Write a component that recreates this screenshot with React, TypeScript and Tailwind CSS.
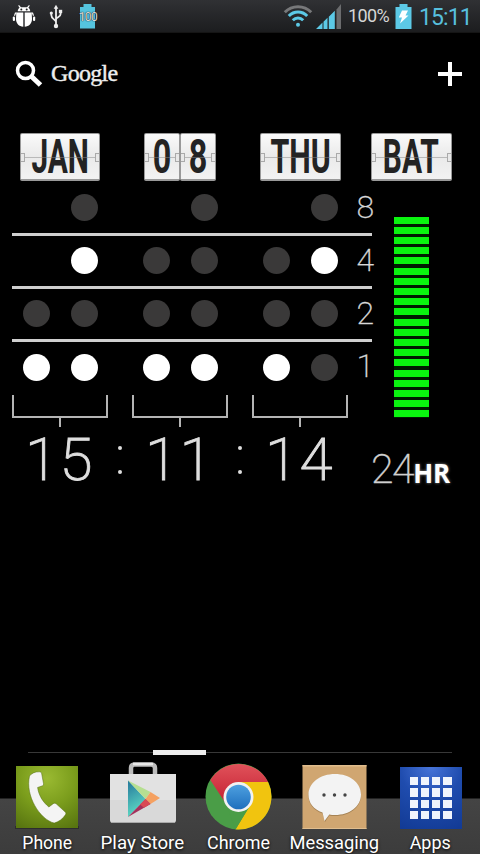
import { ReactNode } from "react";

// 0 = off, 1 = on, null = no lamp in that position
const rows = [
  { value: "8", lamps: [null, 0, null, 0, null, 0] },
  { value: "4", lamps: [null, 1, 0, 0, 0, 1] },
  { value: "2", lamps: [0, 0, 0, 0, 0, 0] },
  { value: "1", lamps: [1, 1, 1, 1, 1, 0] },
];

function StatusBar() {
  return (
    <div className="h-[33px] bg-linear-to-b from-[#303134] to-[#1c1d1f] border-b border-[#151515] flex items-center pl-3 pr-[9px]">
      <svg width="24" height="24" viewBox="0 0 24 24" fill="#fff">
        <path d="M7 1l2 2.300h6L17 1l.8.8-1.400 2C17.800 5 18.200 6 18.200 7.200H5.800C5.800 6 6.200 5 7.600 3.800l-1.400-2z" />
        <circle cx="9.300" cy="5.500" r="1" fill="#222" />
        <circle cx="14.700" cy="5.500" r="1" fill="#222" />
        <path d="M4.300 8.500h7v14.300C7 22.500 4 19.500 4 15zM12.700 8.500h7L20 15c0 4.500-3 7.500-7.300 7.800z" />
        <rect x="0.800" y="12.500" width="2.200" height="4.500" rx="1" />
        <rect x="21" y="12.500" width="2.200" height="4.500" rx="1" />
        <path d="M2 11.500l1-3h1.500v1H4l-1 2.500zM22 11.500l-1-3h-1.500v1h.5l1 2.500z" />
      </svg>
      <svg className="ml-[13px]" width="14" height="25" viewBox="0 0 14 25" fill="none" stroke="#eee" strokeWidth="1.800">
        <path d="M7 4v17M7 18C7 15.500 2.300 15.500 2.300 11V9M7 15.500c0-2.500 4.600-2.200 4.600-5.500V8" />
        <path d="M7 .8l2.300 4H4.700z" fill="#eee" stroke="none" />
        <circle cx="7" cy="22" r="2.200" fill="#eee" stroke="none" />
        <circle cx="2.300" cy="9" r="1.600" fill="#eee" stroke="none" />
        <path d="M9.900 5.800h3.300v3.300H9.900z" fill="#eee" stroke="none" />
      </svg>
      <div className="ml-[16px] relative w-[18px] h-[25px]">
        <svg width="18" height="25" viewBox="0 0 18 25" fill="#55c4de">
          <path d="M4.500 0h8v3H16v21.500H1V3h3.500z" />
        </svg>
        <span className="absolute left-[-1px] top-[6px] w-5 text-center text-[12px] leading-[15px] tracking-[-0.5px] text-[#ddd] [text-shadow:0_0_1px_#111,0_0_1px_#333]">100</span>
      </div>
      <div className="ml-auto flex items-center">
        <svg width="30" height="24" viewBox="0 0 30 24" fill="none" strokeWidth="3">
          <path d="M1.800 8.200C9 .8 21 .8 28.200 8.200" stroke="#77787a" />
          <path d="M5.800 12C11 6.700 19 6.700 24.200 12M9.800 16.200c3-3 7.400-3 10.400 0" stroke="#5cc9e6" />
          <circle cx="15" cy="20.800" r="2" fill="#5cc9e6" stroke="none" />
        </svg>
        <svg className="ml-[3px]" width="26" height="25" viewBox="0 0 26 25">
          <path d="M20.500 5.500L25 0v25h-4.500z" fill="#6b6c6e" />
          <path d="M0 25l6.500-6.500V25zM7.500 17.700l4-4V25h-4zM12.800 12.700L18.800 6.700V25h-6z" fill="#5cc9e6" />
        </svg>
        <span className="ml-[6px] w-[45px] text-[18px] leading-6 text-[#d6d6d6] tracking-[-0.6px] whitespace-nowrap">100%</span>
        <svg className="ml-[2px]" width="17" height="25" viewBox="0 0 17 25">
          <path d="M4.500 0h8v3H16.500v22H.5V3h4z" fill="#5cc9e6" />
          <path d="M7 6.500h6l-2.500 5h3L5 19.500l2-6H3.800z" fill="#fff" />
        </svg>
        <span className="ml-[7px] mt-[3px] w-[52px] text-[23px] leading-6 text-[#57bfdd] tracking-[-0.9px] whitespace-nowrap">15:11</span>
      </div>
    </div>
  );
}

function FlipCard({ text, className, scale }: { text: string; className: string; scale: string }) {
  return (
    <div className={`relative h-[48px] rounded-[2px] border border-[#999] border-b-2 bg-linear-to-b from-[#fafafa] via-[#eaeaea] to-[#f2f2f2] flex items-center justify-center ${className}`}>
      <span className={`text-[49px] leading-[58px] font-bold text-[#232323] whitespace-nowrap ${scale}`}>{text}</span>
      <div className="absolute inset-x-0 top-[23px] h-px bg-[#888]/50" />
      <div className="absolute left-0 top-[19px] w-[4px] h-[9px] border border-l-0 border-[#aaa] bg-[#e8e8e8]" />
      <div className="absolute right-0 top-[19px] w-[4px] h-[9px] border border-r-0 border-[#aaa] bg-[#e8e8e8]" />
    </div>
  );
}

function Lamp({ state }: { state: number | null }) {
  if (state === null) return <div className="size-[27px]" />;
  return <div className={`size-[27px] rounded-full ${state ? "bg-white" : "bg-[#3a3939]"}`} />;
}

function Bracket({ children }: { children: string }) {
  return (
    <div className="w-[96px]">
      <div className="h-[23px] border-2 border-t-0 border-[#b4b4b4]" />
      <div className="mx-auto w-[2px] h-[9px] bg-[#b4b4b4]" />
      <div className="mt-[-2px] pl-[13px] text-[60px] leading-[70px] font-[200] tracking-[1.500px] text-[#dedede] whitespace-nowrap [-webkit-text-stroke:0.9px_#dedede]">{children}</div>
    </div>
  );
}

function Colon() {
  return (
    <div className="w-[24px] pt-[51px] flex flex-col items-center gap-5">
      <div className="size-[4px] rounded-full bg-[#ddd]" />
      <div className="size-[4px] rounded-full bg-[#ddd]" />
    </div>
  );
}

function BinaryClock() {
  return (
    <div className="flex">
      <div className="w-[386px] pl-3">
        {rows.map((row, i) => (
          <div key={row.value} className={`relative w-[360px] h-[53.200px] flex items-center ${i < 3 ? "border-b-[3px] border-[#cfcfcf]" : "pb-[3px]"}`}>
            <div className="flex pl-[10.500px]">
              {[0, 2, 4].map((n) => (
                <div key={n} className="flex gap-[21px] w-[120px]">
                  <Lamp state={row.lamps[n]} />
                  <Lamp state={row.lamps[n + 1]} />
                </div>
              ))}
            </div>
            <span className="absolute top-[-1px] right-[-2px] text-[32px] leading-[50px] font-[200] text-[#d8d8d8] [-webkit-text-stroke:0.3px_#d8d8d8]">{row.value}</span>
          </div>
        ))}
        <div className="flex">
          <Bracket>15</Bracket>
          <Colon />
          <Bracket>11</Bracket>
          <Colon />
          <Bracket>14</Bracket>
        </div>
      </div>
      <div className="pt-[34px]">
        <div className="ml-[8px] w-[34.500px] h-[201px] flex flex-col justify-between bg-[#011c01]">
          {Array.from({ length: 20 }, (_, i) => (
            <div key={i} className="h-[7px] bg-[#0af50f]" />
          ))}
        </div>
        <div className="ml-[-15px] mt-[27px] flex items-baseline text-[#d0d0d0]">
          <span className="text-[41px] leading-[48px] font-[200] tracking-[-1.500px] [-webkit-text-stroke:0.3px_#d0d0d0]">24</span>
          <span className="font-['Open_Sans',sans-serif] text-[26px] leading-[30px] font-bold text-white [text-shadow:0_0_3px_#999]">HR</span>
        </div>
      </div>
    </div>
  );
}

function DockItem({ label, scale, children }: { label: string; scale: string; children: ReactNode }) {
  return (
    <div className="flex flex-col items-center">
      <div className="h-[70px] flex items-center justify-center">{children}</div>
      <span className={`text-[18.500px] leading-[22px] text-white whitespace-nowrap [text-shadow:0_1px_3px_#000] ${scale}`}>{label}</span>
    </div>
  );
}

function Dock() {
  return (
    <div className="h-[92px] bg-[linear-gradient(to_bottom,#000_36px,#444_37px,#3c3c3c_100%)]">
      <div className="ml-[-1px] grid grid-cols-[repeat(5,95.900px)]">
        <DockItem label="Phone" scale="scale-x-[0.950]">
          <svg width="64" height="66" viewBox="0 0 64 66">
            <defs>
              <radialGradient id="phone" cx="0.500" cy="0.200" r="0.900">
                <stop offset="0" stopColor="#9aba32" />
                <stop offset="0.500" stopColor="#7b9d1c" />
                <stop offset="1" stopColor="#587510" />
              </radialGradient>
            </defs>
            <path d="M0 62h64v3H0z" fill="#222" opacity="0.600" />
            <path d="M1 2h62v62H1z" fill="url(#phone)" />
            <path d="M14.500 12c2-2.800 6-4.500 10-4.200 1.500.1 2 .8 2.200 2l1.800 9.700c.2 1.400-.4 2.100-1.600 2.500l-4.300 1.500c1.200 8 5.200 14.500 11.300 19.500l4.300-3.300c1-.8 2-.7 3 .1l8.800 8c1 1 1.200 1.800.4 3-2.400 4-6.700 7-11.200 8.300C25 55.500 10 32 14.500 12z" fill="#f4f4f4" stroke="#4f6b0c" strokeOpacity="0.500" />
          </svg>
        </DockItem>
        <DockItem label="Play Store" scale="scale-x-[1.010]">
          <svg className="-mt-2" width="68" height="62" viewBox="0 0 68 62">
            <defs>
              <linearGradient id="playBlue" x1="0" y1="0" x2="0.300" y2="1">
                <stop offset="0" stopColor="#24779b" />
                <stop offset="1" stopColor="#5fdcc5" />
              </linearGradient>
            </defs>
            <path d="M22 12V6q0-3 3-3.500h17.500q3.500.5 3.500 3.500v6" fill="none" stroke="#bcbcbc" strokeWidth="4.500" />
            <path d="M24 2h20" stroke="#e8e8e8" strokeWidth="2.500" />
            <path d="M1 12h66v46q0 3-3 3H4q-3 0-3-3z" fill="#d9d9d9" />
            <path d="M1 12h66v26H1z" fill="#e2e2e2" />
            <path d="M2 60.500h64" stroke="#aaa" />
            <path d="M19 18.500v36.500l17.500-18z" fill="url(#playBlue)" />
            <path d="M19 18.500l22.500 11.500-5 7z" fill="#b6df91" />
            <path d="M41.500 30L51 36l-9.500 6-5-5z" fill="#f5a161" />
            <path d="M19 55l17.500-18 5 5z" fill="#a5315c" />
            <path d="M31 42.500l5.500-5.500 5 5-6.500 3.800z" fill="#d94a55" />
          </svg>
        </DockItem>
        <DockItem label="Chrome" scale="scale-x-[0.970]">
          <svg className="ml-[-1px] -mt-[1px]" width="67" height="67" viewBox="-33.500 -33.500 67 67">
            <defs>
              <linearGradient id="cRed" x1="0" y1="0" x2="0" y2="1">
                <stop offset="0" stopColor="#e0525a" />
                <stop offset="1" stopColor="#c41f32" />
              </linearGradient>
              <linearGradient id="cBlue" x1="0" y1="0" x2="0" y2="1">
                <stop offset="0" stopColor="#4ea0e0" />
                <stop offset="1" stopColor="#1e6fbd" />
              </linearGradient>
            </defs>
            <circle r="33" fill="#4a9d47" />
            <path d="M0-14.500H29.600A33 33 0 0 1-3 32.900L12.600 7.300z" fill="#f1c40f" />
            <path d="M-28.200-16.500A33 33 0 0 1 29.600-14.500H0L-12.600 7.300z" fill="url(#cRed)" />
            <path d="M-12.600 7.300L-3 32.900 12.600 7.300z" fill="#4a9d47" />
            <circle r="15" cy="0.500" fill="#f2f2f2" />
            <circle r="12.300" cy="0.500" fill="url(#cBlue)" />
          </svg>
        </DockItem>
        <DockItem label="Messaging" scale="scale-x-[0.990]">
          <svg width="65" height="66" viewBox="0 0 65 66">
            <path d="M.5 1h64v64H.5z" fill="#d0a671" />
            <path d="M.5 1h64v1.500H.5zM.5 64h64v1H.5z" fill="#e0bd8e" />
            <path d="M33 11c14.500 0 26 8.500 26 20.500S47.500 52 33 52c-2 0-4-.1-5.700-.5L23 58l-2.500-8.500C11.500 46.500 6.500 40 6.500 31.500 6.500 19.500 18.500 11 33 11z" fill="#7c5f38" opacity="0.500" />
            <path d="M33 10c14.500 0 26 8.500 26 20.500S47.500 51 33 51c-2 0-4-.1-5.700-.5L22.500 57l-2-8.500C11.500 45.500 6.500 39 6.500 30.500 6.500 18.500 18.500 10 33 10z" fill="#f3f3f3" />
            <circle cx="22" cy="31" r="1.700" fill="#444" />
            <circle cx="32.500" cy="31" r="1.700" fill="#444" />
            <circle cx="43" cy="31" r="1.700" fill="#444" />
          </svg>
        </DockItem>
        <DockItem label="Apps" scale="scale-x-[0.970]">
          <div className="mt-[2px] w-[62px] h-[62px] bg-[radial-gradient(circle_at_50%_0%,#4774d8,#1f4cae_45%,#123a94)] grid grid-cols-4 gap-[3px] p-[10px]">
            {Array.from({ length: 16 }, (_, i) => (
              <div key={i} className="bg-[#f0f4fc]" />
            ))}
          </div>
        </DockItem>
      </div>
    </div>
  );
}

export default function App() {
  return (
    <div className="w-[480px] h-[854px] bg-black flex flex-col overflow-hidden antialiased font-[Roboto,sans-serif]">
      <StatusBar />
      <div className="h-[82px] flex items-center pl-[15px] pr-[17px]">
        <svg width="28" height="28" viewBox="0 0 28 28" fill="none" stroke="#fff">
          <circle cx="10.500" cy="10.500" r="8" strokeWidth="3.500" />
          <path d="M16.500 16.500l9 8.500" strokeWidth="5" />
        </svg>
        <span className="ml-[8px] -mt-[2px] font-['Liberation_Serif',serif] text-[24px] leading-7 tracking-[-0.700px] text-[#eee] [-webkit-text-stroke:0.4px_#eee]">Google</span>
        <svg className="ml-auto" width="26" height="26" viewBox="0 0 26 26" stroke="#fff" strokeWidth="4">
          <path d="M13 1v24M1 13h24" />
        </svg>
      </div>
      <div className="mt-[18px] flex pl-5">
        <FlipCard text="JAN" className="w-[80px]" scale="scale-x-[0.610]" />
        <FlipCard text="0" className="ml-[44px] w-[36px]" scale="scale-x-[0.660]" />
        <FlipCard text="8" className="w-[36px]" scale="scale-x-[0.660]" />
        <FlipCard text="THU" className="ml-[44px] w-[81px]" scale="scale-x-[0.620]" />
        <FlipCard text="BAT" className="ml-[30px] w-[81px] pr-[2px]" scale="scale-x-[0.610]" />
      </div>
      <div className="mt-[1.500px]">
        <BinaryClock />
      </div>
      <div className="mt-auto mb-[7px] ml-[28px] w-[424px] flex items-center">
        <div className="w-[124.500px] h-px bg-[#383838]" />
        <div className="w-[53.500px] h-[5px] bg-[#eee]" />
        <div className="flex-1 h-px bg-[#383838]" />
      </div>
      <Dock />
    </div>
  );
}
